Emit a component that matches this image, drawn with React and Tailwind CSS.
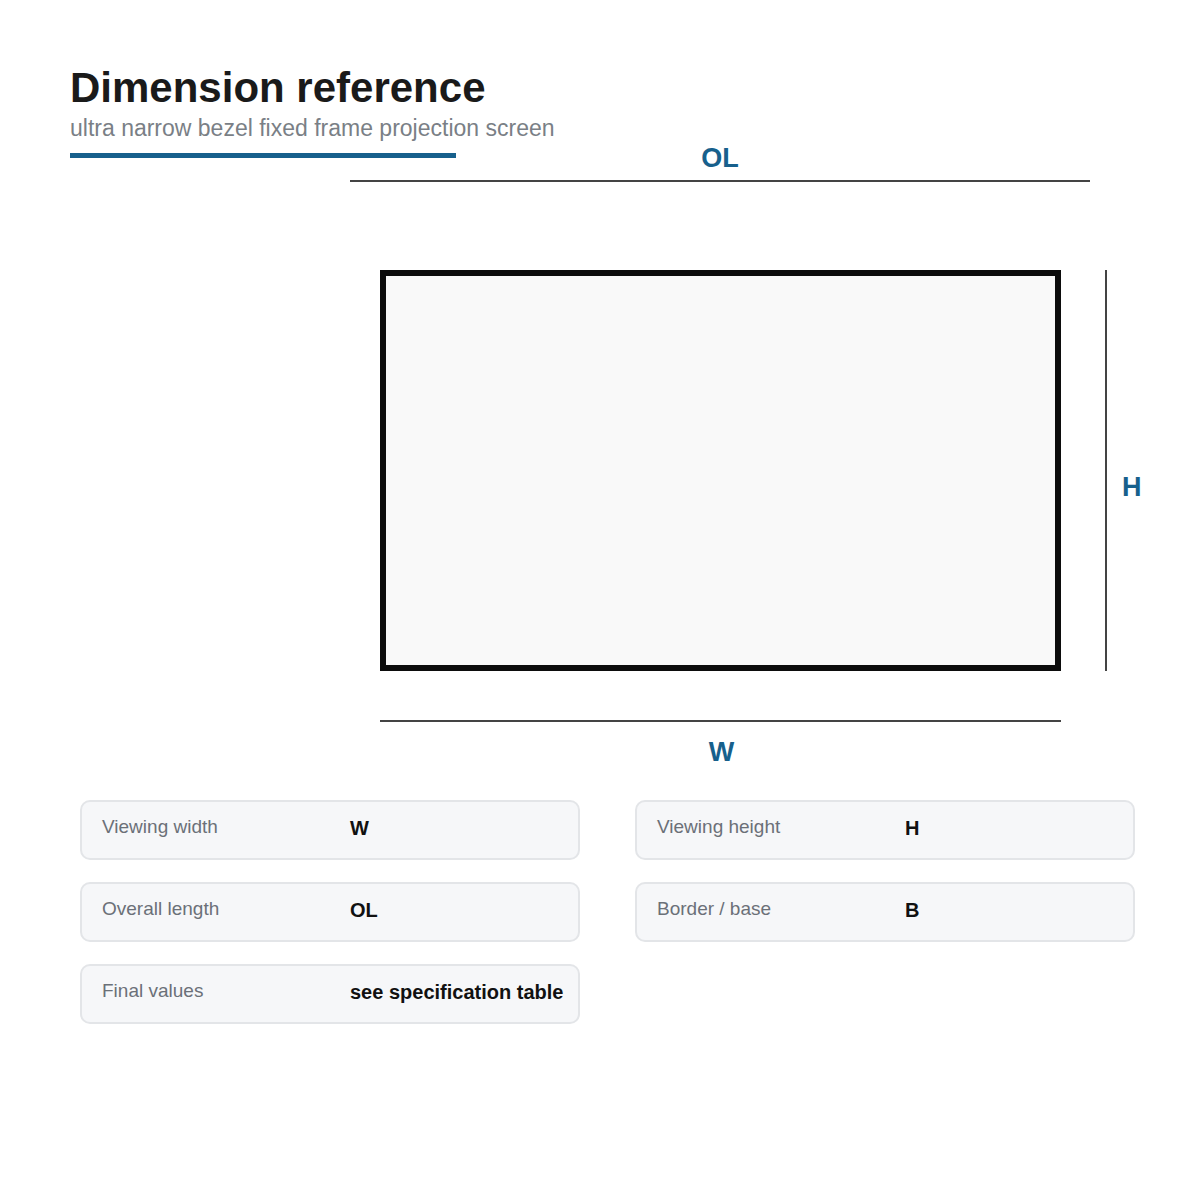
export default function App() {
  const font = { fontFamily: '"Liberation Sans", Arial, sans-serif' };
  const Card = ({ l, v }) => (
    <div className="flex items-center h-[60px] w-[500px] rounded-[10px] border-2 border-[#e3e5e8] bg-[#f6f7f9] pl-[20px] pb-[5px]">
      <div className="w-[248px] text-[19px] text-[#6b7078]">{l}</div>
      <div className="text-[20px] font-bold text-[#111]">{v}</div>
    </div>
  );
  return (
    <div className="w-[1200px] h-[1200px] bg-white relative" style={font}>
      <div className="pl-[70px] pt-[64px]">
        <div className="text-[42px] leading-[48px] font-bold text-[#1a1a1a]">Dimension reference</div>
        <div className="text-[23px] leading-[27px] text-[#7a7f86] mt-[3px]">ultra narrow bezel fixed frame projection screen</div>
        <div className="w-[386px] h-[5px] bg-[#17608c] mt-[11px]"></div>
      </div>
      <div className="absolute left-0 top-0 w-[1200px] h-[790px]">
        <div className="absolute left-[350px] top-[138px] w-[740px] text-center text-[27px] font-bold text-[#17608c]">OL</div>
        <div className="absolute left-[350px] top-[180px] w-[740px] h-[2px] bg-[#444]"></div>
        <div className="absolute left-[380px] top-[270px] w-[681px] h-[401px] border-[6px] border-[#0c0c0c] bg-[#f9f9f9]"></div>
        <div className="absolute left-[1105px] top-[270px] w-[2px] h-[401px] bg-[#444]"></div>
        <div className="absolute left-[1122px] top-[467px] text-[27px] font-bold text-[#17608c]">H</div>
        <div className="absolute left-[380px] top-[720px] w-[681px] h-[2px] bg-[#444]"></div>
        <div className="absolute left-[381px] top-[732px] w-[681px] text-center text-[27px] font-bold text-[#17608c]">W</div>
      </div>
      <div className="absolute left-[80px] top-[800px] flex gap-[55px]">
        <div className="flex flex-col gap-[22px]">
          <Card l="Viewing width" v="W" />
          <Card l="Overall length" v="OL" />
          <Card l="Final values" v="see specification table" />
        </div>
        <div className="flex flex-col gap-[22px]">
          <Card l="Viewing height" v="H" />
          <Card l="Border / base" v="B" />
        </div>
      </div>
    </div>
  );
}
